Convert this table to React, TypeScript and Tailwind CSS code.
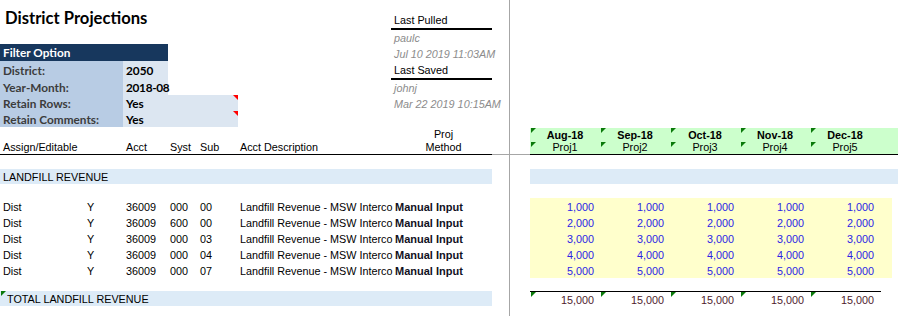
import React from "react";

const months = [
  ["Aug-18", "Proj1"],
  ["Sep-18", "Proj2"],
  ["Oct-18", "Proj3"],
  ["Nov-18", "Proj4"],
  ["Dec-18", "Proj5"],
];

const rows = [
  { syst: "000", sub: "00", v: "1,000" },
  { syst: "600", sub: "00", v: "2,000" },
  { syst: "000", sub: "03", v: "3,000" },
  { syst: "000", sub: "04", v: "4,000" },
  { syst: "000", sub: "07", v: "5,000" },
];

function GreenTri({ top = 0 }: { top?: number }) {
  return (
    <div
      className="absolute left-[1px] w-0 h-0 border-t-[5px] border-t-[#0a7a0a] border-r-[5px] border-r-transparent"
      style={{ top }}
    />
  );
}

function RedTri() {
  return (
    <div className="absolute right-0 top-0 w-0 h-0 border-t-[5px] border-t-[#ff0000] border-l-[5px] border-l-transparent" />
  );
}

export default function App() {
  return (
    <div className="relative w-[898px] h-[316px] bg-white overflow-hidden flex text-[10.8px] text-black font-['Liberation_Sans',Arial,sans-serif] leading-none">
      {/* LEFT PANE */}
      <div className="w-[509px] shrink-0 flex flex-col">
        {/* top region */}
        <div className="h-[128px] flex">
          <div className="w-[391px] flex flex-col">
            <div className="h-[44px] pl-[5px] pt-[8px] font-['Lato',sans-serif] font-bold text-[16.6px] leading-[20px] text-black whitespace-nowrap">
              District Projections
            </div>
            <div className="flex flex-col font-['Lato',sans-serif] font-bold text-[11.8px] whitespace-nowrap">
              <div className="h-[17px] w-[168px] bg-[#17375d] text-white pl-[3px] flex items-center pt-[1px]">
                Filter Option
              </div>
              <div className="h-[17px] flex">
                <div className="w-[123px] bg-[#b8cce4] text-[#3c3c3c] pl-[3px] flex items-center pt-[2px]">District:</div>
                <div className="w-[45px] bg-[#dce6f1] pl-[3px] flex items-center pt-[2px]">2050</div>
              </div>
              <div className="h-[17px] flex">
                <div className="w-[123px] bg-[#b8cce4] text-[#3c3c3c] pl-[3px] flex items-center pt-[2px]">Year-Month:</div>
                <div className="w-[45px] bg-[#dce6f1] pl-[3px] flex items-center pt-[2px] tracking-[-0.3px]">2018-08</div>
              </div>
              <div className="h-[16px] flex">
                <div className="w-[123px] bg-[#b8cce4] text-[#3c3c3c] pl-[3px] flex items-center pt-[2px]">Retain Rows:</div>
                <div className="relative w-[115px] bg-[#dce6f1] pl-[3px] flex items-center pt-[2px]">
                  Yes
                  <RedTri />
                </div>
              </div>
              <div className="h-[16px] flex">
                <div className="w-[123px] bg-[#b8cce4] text-[#3c3c3c] pl-[3px] flex items-center pt-[2px]">Retain Comments:</div>
                <div className="relative w-[115px] bg-[#dce6f1] pl-[3px] flex items-center pt-[2px]">
                  Yes
                  <RedTri />
                </div>
              </div>
            </div>
          </div>
          <div className="w-[101px] flex flex-col whitespace-nowrap">
            <div className="h-[12px]" />
            <div className="h-[18px] border-b-2 border-black pl-[3px] flex items-center">Last Pulled</div>
            <div className="h-[16px] pl-[3px] flex items-center italic text-[#8c8c8c]">paulc</div>
            <div className="h-[17px] pl-[3px] flex items-center italic text-[#8c8c8c]">Jul 10 2019 11:03AM</div>
            <div className="h-[17px] border-b-2 border-black pl-[3px] flex items-center">Last Saved</div>
            <div className="h-[16px] pl-[3px] flex items-center italic text-[#8c8c8c]">johnj</div>
            <div className="h-[16px] pl-[3px] flex items-center italic text-[#8c8c8c]">Mar 22 2019 10:15AM</div>
          </div>
        </div>

        {/* header row */}
        <div className="h-[27px] flex">
          <div className="w-[492px] h-[27px] border-b border-black flex leading-[13px]">
            <div className="w-[126px] pl-[3px] flex flex-col justify-end">Assign/Editable</div>
            <div className="w-[44px] flex flex-col justify-end">Acct</div>
            <div className="w-[30px] flex flex-col justify-end">Syst</div>
            <div className="w-[40px] flex flex-col justify-end">Sub</div>
            <div className="w-[155px] flex flex-col justify-end">Acct Description</div>
            <div className="w-[97px] flex flex-col justify-end items-center">
              <div>Proj</div>
              <div>Method</div>
            </div>
          </div>
          <div className="w-[17px] h-[27px] border-b border-[#a6a6a6]" />
        </div>

        <div className="h-[14px]" />
        {/* section band */}
        <div className="h-[15px] w-[492px] bg-[#ddebf7] pl-[3px] flex items-center pt-[1px]">LANDFILL REVENUE</div>
        <div className="h-[14px]" />

        {/* data rows */}
        {rows.map((r, i) => (
          <div key={i} className="h-[16px] flex items-center pt-[2px] whitespace-nowrap">
            <div className="w-[87px] pl-[3px]">Dist</div>
            <div className="w-[39px]">Y</div>
            <div className="w-[44px]">36009</div>
            <div className="w-[30px]">{r.syst}</div>
            <div className="w-[40px]">{r.sub}</div>
            <div className="w-[155px]">Landfill Revenue - MSW Interco</div>
            <div className="font-bold text-[11px] text-[#111122]">Manual Input</div>
          </div>
        ))}

        <div className="h-[13px]" />
        <div className="relative h-[15px] w-[492px] bg-[#ddebf7] pl-[7px] flex items-center pt-[1px]">
          <GreenTri top={0} />
          TOTAL LANDFILL REVENUE
        </div>
      </div>

      {/* freeze pane divider */}
      <div className="w-[1px] shrink-0 bg-[#a6a6a6]" />

      {/* RIGHT PANE */}
      <div className="flex-1 flex flex-col">
        <div className="h-[128px]" />
        <div className="h-[27px] flex">
          <div className="w-[20px] h-[27px] border-b border-[#a6a6a6]" />
          <div className="flex-1 h-[27px] bg-[#ccffcc] border-b border-black flex leading-[13px]">
            {months.map(([m, p]) => (
              <div key={m} className="relative w-[70px] flex flex-col items-center">
                <GreenTri top={0} />
                <GreenTri top={14} />
                <div className="h-[13px] font-bold pt-[1px]">{m}</div>
                <div className="h-[13px]">{p}</div>
              </div>
            ))}
          </div>
        </div>

        <div className="h-[14px]" />
        <div className="h-[15px] ml-[20px] bg-[#ddebf7]" />
        <div className="h-[14px]" />

        <div className="ml-[20px] w-[362px] bg-[#ffffcc] flex flex-col">
          {rows.map((r, i) => (
            <div key={i} className="h-[16px] flex items-center pt-[2px] text-[#2a24e6]">
              {months.map(([m]) => (
                <div key={m} className="w-[70px] text-right pr-[6px]">{r.v}</div>
              ))}
            </div>
          ))}
        </div>

        <div className="h-[13px]" />
        <div className="ml-[20px] w-[351px] h-[16px] border-t border-black flex items-center text-[#4e1a2c]">
          {months.map(([m]) => (
            <div key={m} className="relative w-[70px] h-full flex items-center justify-end pr-[6px] pt-[1px]">
              <GreenTri top={0} />
              15,000
            </div>
          ))}
        </div>
      </div>
    </div>
  );
}
